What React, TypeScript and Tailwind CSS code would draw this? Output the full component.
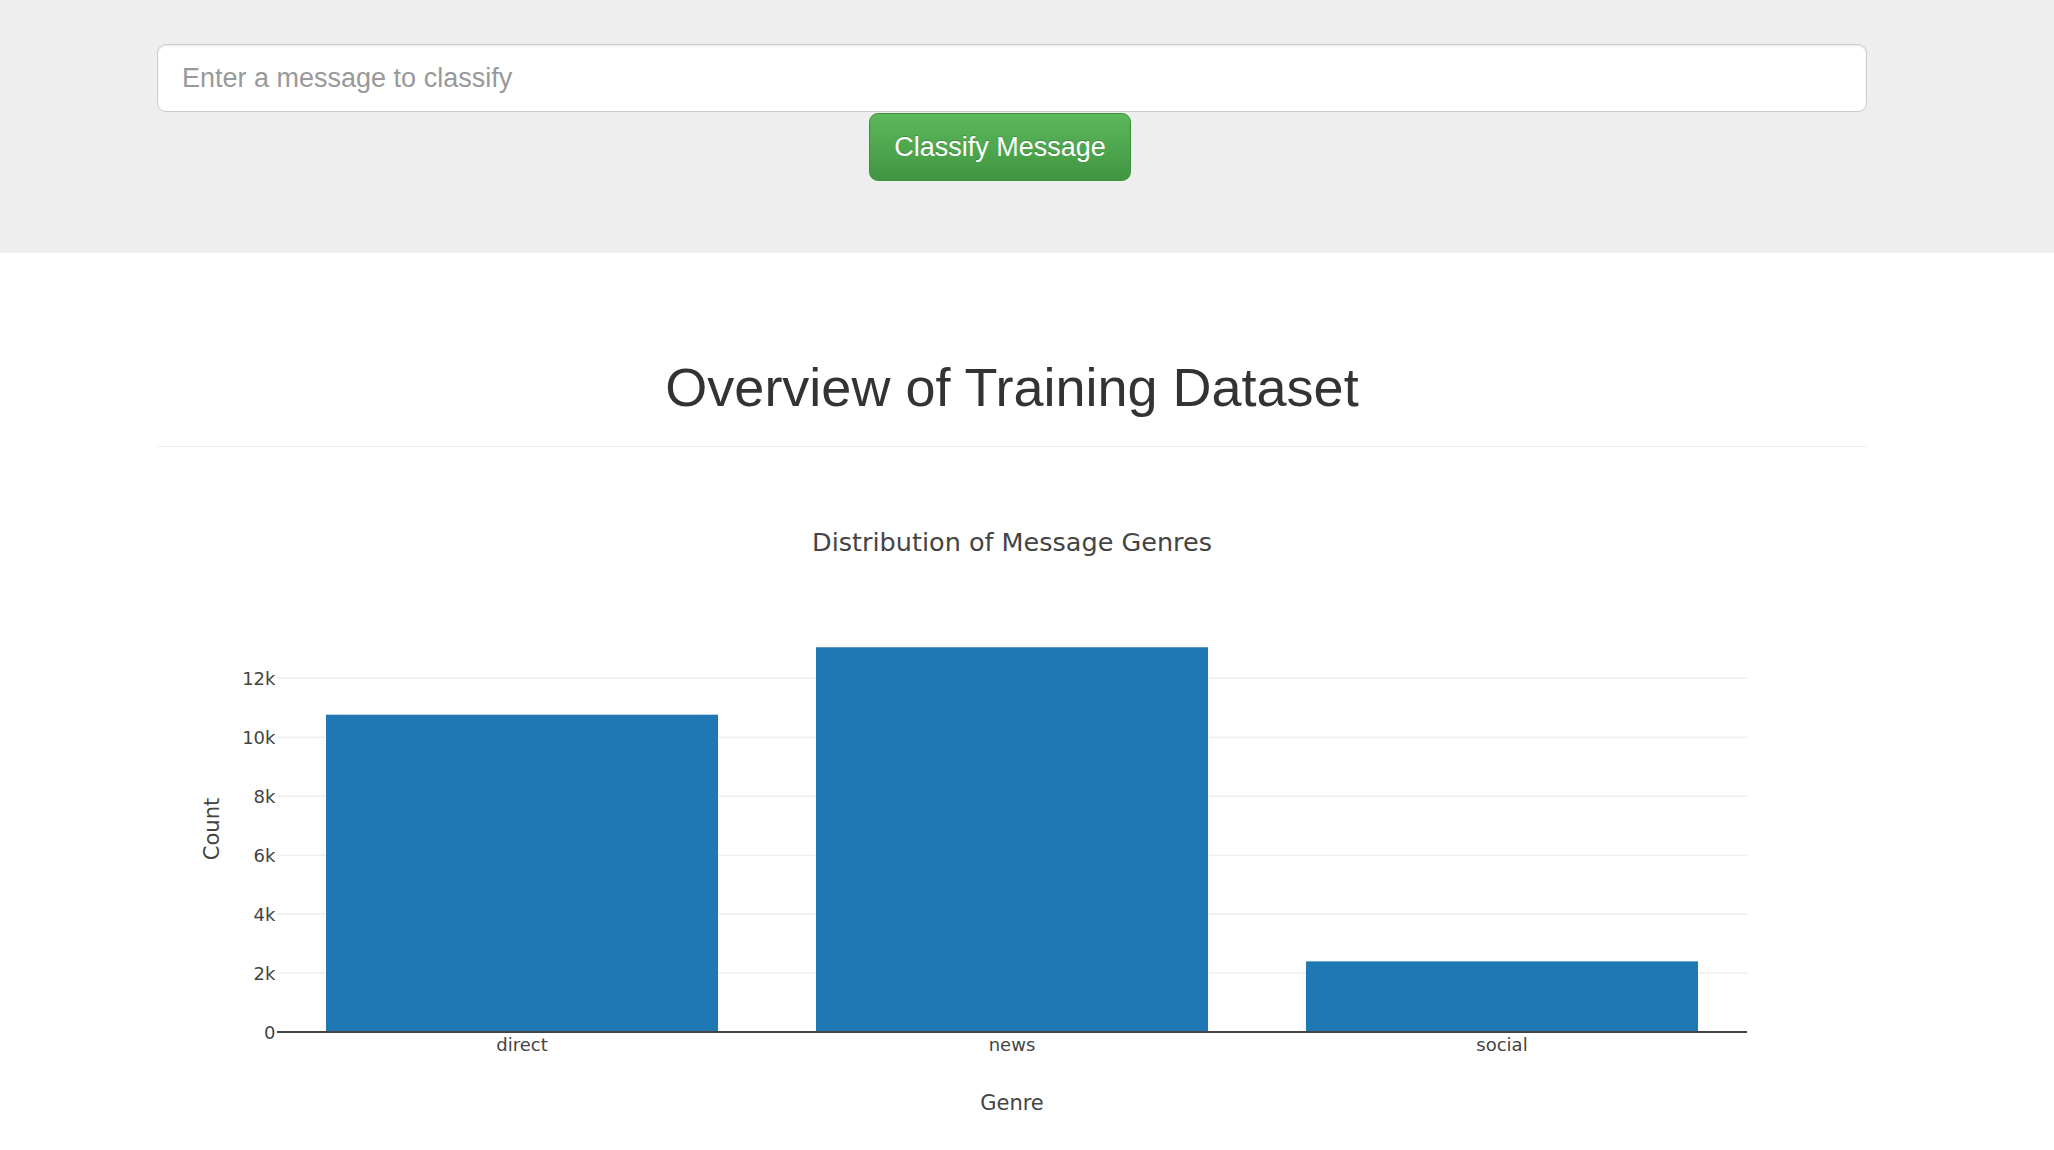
import React from 'react';

const genres = [
    { name: 'direct', count: 10766 },
    { name: 'news', count: 13054 },
    { name: 'social', count: 2396 },
];

// plot geometry (chart box is 1710 x 675, plotly default margins scaled 1.5x)
const W = 1710;
const H = 675;
const L = 120;
const R = 1590;
const T = 150;
const B = 555;
const YMAX = 13741;
const yOf = (v: number) => B - (v * (B - T)) / YMAX;

function GenreChart() {
    const slot = (R - L) / genres.length;
    const barW = slot * 0.8;
    const ticks = [0, 2000, 4000, 6000, 8000, 10000, 12000];
    return (
        <svg width={W} height={H} className="block" style={{ fontFamily: '"DejaVu Sans", Verdana, sans-serif' }}>
            {/* gridlines */}
            {ticks.slice(1).map((t) => (
                <line key={t} x1={L} x2={R} y1={yOf(t)} y2={yOf(t)} stroke="#eeeeee" strokeWidth={1.5} />
            ))}
            {/* bars */}
            {genres.map((g, i) => (
                <rect
                    key={g.name}
                    x={L + i * slot + (slot - barW) / 2}
                    y={yOf(g.count)}
                    width={barW}
                    height={B - yOf(g.count)}
                    fill="#1f77b4"
                />
            ))}
            {/* zero line */}
            <line x1={L} x2={R} y1={B} y2={B} stroke="#444444" strokeWidth={2} />
            {/* y tick labels */}
            {ticks.map((t) => (
                <text key={t} x={L - 1.5} y={yOf(t)} textAnchor="end" dominantBaseline="central" fontSize={18} fill="#444444">
                    {t === 0 ? '0' : `${t / 1000}k`}
                </text>
            ))}
            {/* x tick labels */}
            {genres.map((g, i) => (
                <text key={g.name} x={L + i * slot + slot / 2} y={567.5} textAnchor="middle" dominantBaseline="central" fontSize={18} fill="#444444">
                    {g.name}
                </text>
            ))}
            {/* axis titles */}
            <text x={855} y={625.5} textAnchor="middle" dominantBaseline="central" fontSize={21} fill="#444444">
                Genre
            </text>
            <text
                x={55}
                y={352}
                textAnchor="middle"
                dominantBaseline="central"
                fontSize={21}
                fill="#444444"
                transform="rotate(-90 55 352)"
            >
                Count
            </text>
            {/* chart title */}
            <text x={855} y={65} textAnchor="middle" dominantBaseline="central" fontSize={25.5} fill="#444444">
                Distribution of Message Genres
            </text>
        </svg>
    );
}

export default function App() {
    return (
        <div className="min-h-screen bg-white font-['Liberation_Sans',Arial,sans-serif]">
            {/* Jumbotron with the classify form */}
            <div className="h-[253px] bg-[#eeeeee] pt-[44px]">
                <div className="ml-[157px] w-[1710px]">
                    <input
                        type="text"
                        placeholder="Enter a message to classify"
                        className="block h-[68px] w-full rounded-[9px] border-[1.5px] border-[#cccccc] bg-white px-[24px] text-[27px] text-[#555] shadow-[inset_0_1.5px_1.5px_rgba(0,0,0,0.075)] outline-none placeholder:text-[#999999]"
                    />
                    <button
                        type="button"
                        className="ml-[712px] mt-px flex h-[68px] w-[262px] items-center justify-center rounded-[9px] border-[1.5px] border-[#3e8f3e] bg-gradient-to-b from-[#5cb85c] to-[#419641] text-[27px] text-white [text-shadow:0_-1px_0_rgba(0,0,0,0.2)]"
                    >
                        Classify Message
                    </button>
                </div>
            </div>

            {/* Overview */}
            <div className="ml-[157px] w-[1710px]">
                <h1 className="mt-[105px] text-center text-[54px] font-normal leading-[59px] text-[#333333]">
                    Overview of Training Dataset
                </h1>
                <div className="mt-[29px] border-t-[1.5px] border-[#eeeeee]" />
                <div className="mt-[30px]">
                    <GenreChart />
                </div>
            </div>
        </div>
    );
}
